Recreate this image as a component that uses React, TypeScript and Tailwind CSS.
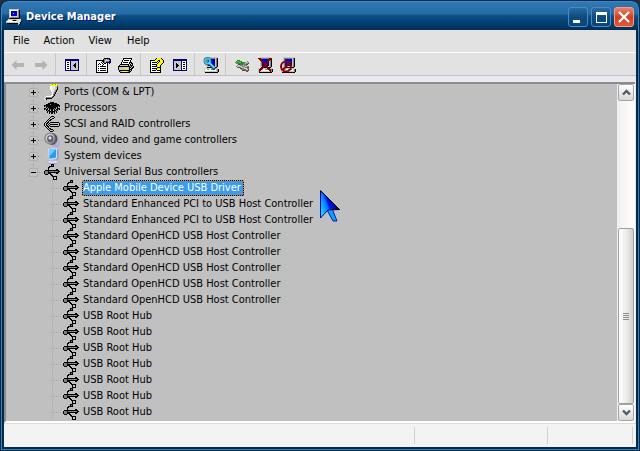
import type { ReactNode } from "react";

const palette: Record<string, string> = {
  K: "#000000",
  W: "#ffffff",
  G: "#808080",
  D: "#484848",
  S: "#c8c8c0",
  L: "#e4e4e4",
  B: "#0000e0",
  N: "#000080",
  C: "#38c0f0",
  A: "#90dcff",
  Y: "#ffff00",
  O: "#a09000",
  E: "#209020",
  F: "#60c850",
  T: "#906030",
};

function Pixels({ rows, children }: { rows: string[]; children?: ReactNode }) {
  const width = Math.max(...rows.map((r) => r.length));
  return (
    <svg
      width={width}
      height={rows.length}
      viewBox={`0 0 ${width} ${rows.length}`}
      shapeRendering="crispEdges"
      className="block shrink-0"
      aria-hidden="true"
    >
      {rows.flatMap((row, y) =>
        [...row].map((c, x) =>
          palette[c] ? <rect key={`${x}-${y}`} x={x} y={y} width="1" height="1" fill={palette[c]} /> : null
        )
      )}
      {children}
    </svg>
  );
}

const usb = [
  ".......KKK......",
  ".......KGK......",
  ".....KKKKK......",
  "....KK..........",
  "....K...........",
  "....K.......KK..",
  ".KKKKKKKKKKKKKK.",
  "KGGGKGGGGGGGGGKK",
  "KGGGKKKKKKKKKKK.",
  "KGGGKKK.....KK..",
  ".KKK..KK........",
  ".......KK.......",
  "........KKKKK...",
  ".........KSSK...",
  ".........KSSK...",
  ".........KKKK...",
];

const ports = [
  "......YYOYYOYY..",
  "......SYYYYYYG..",
  "......WWLLLSSG..",
  "......WWLLLSSK..",
  "......WWLLLSSK..",
  "......WWLLLSGK..",
  ".......WLLSGK...",
  ".......WLLSGK...",
  "........WSGK....",
  "........WSGK....",
  "........WGK.....",
  ".......WWGK.....",
  "..WWWWWWGK......",
  ".WGGGGGGK.......",
  "WGKKKKKK........",
  ".WK.............",
];

const processor = [
  "................",
  "................",
  "......KKKK......",
  "....KKKKKKKKK...",
  "..KKKKGKKKKKKKK.",
  "KKKKKKKKKKKKKKKK",
  "KGKKKKKKKKKKKKGK",
  ".SKGKKKKKKKKGKS.",
  "KKSKGKKKKKGKSKKK",
  "KGKKSKGKKGKSKKGK",
  ".SKGKKSKKSKKGKS.",
  "..SKGKKKKKKGKS..",
  "...K.KGKKGK.K...",
  ".....K.KK.K.....",
  "................",
  "................",
];

const scsi = [
  ".......KKK......",
  "......KSSSK.....",
  ".....KSSKK......",
  "....KSKK........",
  "...KSKK.........",
  "..KSK...........",
  ".KSKK.KKKKKKKKK.",
  "KSKK.KSSSSSSSSSK",
  "KSK.KSKKKKKKKKSK",
  "KSKK.KSSSSSSSSSK",
  ".KSKK.KKKKKKKKK.",
  "..KSK...........",
  "...KSKK.........",
  "....KSKKK.......",
  ".....KSSSK......",
  "......KKK.......",
];

const computer = [
  "...SSSSSSSSSSS..",
  "...SGGGGGGGGSGK.",
  "...SGBBBBBBNSGK.",
  "...SGBBBBBBNSGK.",
  "...SGBBBBBBNSGK.",
  "...SGBBBBBBNSGK.",
  "...SGBBBBBBNSGK.",
  "...SGBBBBBBNSGK.",
  "...SGNNNNNNNSGK.",
  "...SSSSSSSSSSGK.",
  "....KKKKKKKKKK..",
  ".SSSSSSSSSSSSSS.",
  ".SWWFFWWGGGGWSGK",
  ".SWWWWWWWWWWWSGK",
  ".SSSSSSSSSSSSSGK",
  "..KKKKKKKKKKKKK.",
];

const appIcon = [
  "...SSSSSSSSSS...",
  "...SWWWWWWWWGK..",
  "...SWNNNNNNSGK..",
  "...SWNBBBBBSGK..",
  "...SWNBABBBSGK..",
  "...SWNBBBBBSGK..",
  "...SWNBBBBBSGK..",
  "...SWSSSSSSSGK..",
  "...SGGGGGGGGGK..",
  "....KKKKKKKKK...",
  "..SSSSSSSSSSLLS.",
  ".SWWWWGKKKGWSLS.",
  "SWWWWWWWWWWSLLSK",
  "SSSSSSSSSSSSLSK.",
  ".KKKKKKKKKKKSSK.",
  "............SK..",
];

const paneLeft = [
  "NNNNNNNNNNNNNN",
  "NNNNNNNNNNNNNN",
  "NWWWWNSSSSSSSN",
  "NWKKWNSSSSSSSN",
  "NWWWWNSSSSKSSN",
  "NWKKWNSSSKKSSN",
  "NWWWWNSSKKKSSN",
  "NWKKWNSSSKKSSN",
  "NWWWWNSSSSKSSN",
  "NWKKWNSSSSSSSN",
  "NWWWWNSSSSSSSN",
  "NNNNNNNNNNNNNN",
];

const paneRight = [
  "NNNNNNNNNNNNNN",
  "NNNNNNNNNNNNNN",
  "NSSSSSSSNWWWWN",
  "NSSSSSSSNWKKWN",
  "NSSKSSSSNWWWWN",
  "NSSKKSSSNWKKWN",
  "NSSKKKSSNWWWWN",
  "NSSKKSSSNWKKWN",
  "NSSKSSSSNWWWWN",
  "NSSSSSSSNWKKWN",
  "NSSSSSSSNWWWWN",
  "NNNNNNNNNNNNNN",
];

const properties = [
  ".........KKKKNN.",
  "........KGGSGGNN",
  ".KKKKKKKKGSSSSGN",
  ".KWWWWWKKGSGGGNN",
  ".KWWWWKWKGGKKKNN",
  ".KWWKWWKWKKWK.N.",
  ".KWKWKWWKWWWK...",
  ".KWWWWWKWWWWK...",
  ".KWKWKKKKKKWK...",
  ".KWWWWWWWWWWK...",
  ".KWKWKKKKKKWK...",
  ".KWWWWWWWWWWK...",
  ".KWKWKKKKKKWK...",
  ".KWWWWWWWWWWK...",
  ".KKKKKKKKKKKK...",
];

const printer = [
  ".....KKKKKKKKK..",
  ".....KWWWWWWWK..",
  "....KWKKKKKWK...",
  "....KWWWWWWWK...",
  "...KWKKKKKWKKK..",
  "...KWWWWWWWKSKK.",
  "..KKKKKKKKKSKSK.",
  ".KSSSSSSSSKSKKK.",
  "KKKKKKKKKKKKSKSK",
  "KSSSSSSSSSSKKSKK",
  "KSSSSSSYYYSKSKK.",
  "KSSSSSSSSSSKKK..",
  ".KKKKKKKKKKKSK..",
  ".KGSYYYYYSGKK...",
  "..KKKKKKKKKK....",
];

const help = [
  ".......KYYYYK...",
  "......KYYYYYYK..",
  ".KKKKKYYYKKYYYK.",
  ".KWWWWYYKWKYYYK.",
  ".KWKKKKKWKYYYYK.",
  ".KWWWWWWKYYYYK..",
  ".KWKKKKKYYYYK...",
  ".KWWWWWKYYYK....",
  ".KWKKKKKYYYK....",
  ".KWWWWWWKKKK....",
  ".KWKKKKKYYYK....",
  ".KWWWWWKYYYK....",
  ".KWKKKKWKKKK....",
  ".KWWWWWWWWWK....",
  ".KKKKKKKKKKK....",
];

const update = [
  "................",
  "...EEE..........",
  "..EFFEEE.....G..",
  ".GGEEFFEEEGGSSG.",
  "..GGEEEEEEGSGGD.",
  "....DDEEEGGGDD..",
  "...GSSGGGSGGG...",
  "..GSSSSSGGGSSGG.",
  "...GDDGSSSSGGDD.",
  "......DDGGSSLGG.",
  ".......GGGTTSSD.",
  "........DDDTTTD.",
  "............TD..",
];

function SoundIcon() {
  return (
    <svg width="16" height="16" viewBox="0 0 16 16" className="block shrink-0" aria-hidden="true">
      <ellipse cx="8" cy="7" rx="5.6" ry="6" fill="#55555c" />
      <ellipse cx="5.8" cy="6.3" rx="5.6" ry="5.9" fill="#888890" />
      <ellipse cx="5.8" cy="6.3" rx="4.2" ry="4.6" fill="#c8c8d0" />
      <ellipse cx="6.3" cy="6.8" rx="3.2" ry="3.6" fill="#606068" />
      <circle cx="6" cy="6" r="1.5" fill="#e8e8f4" />
      <path d="M9 14.5Q12 13.5 12.5 10M11.5 15.5Q15 13.5 15 9.5" fill="none" stroke="#9aa0ee" strokeWidth="1.2" />
    </svg>
  );
}

function SystemIcon() {
  return (
    <svg width="16" height="16" viewBox="0 0 16 16" className="block shrink-0" aria-hidden="true">
      <path d="M12 .5L14.500 2V11L12 12Z" fill="#8c98c8" />
      <ellipse cx="9" cy="13.7" rx="5.5" ry="1.9" fill="#e4e4f4" stroke="#9090b8" strokeWidth=".8" />
      <path d="M7 10H11V13.5H7Z" fill="#b8bcd8" />
      <path d="M4 1L13 0V10.5L5 12Z" fill="#c8e4fc" />
      <path d="M5 1.800L12 1V9.600L5.500 10.800Z" fill="#249cf4" />
      <path d="M5 1.800L12 1L5.300 8.500Z" fill="#74ccff" />
    </svg>
  );
}

function ArrowIcon({ right = false }: { right?: boolean }) {
  return (
    <svg width="14" height="10" viewBox="0 0 14 10" aria-hidden="true">
      <path
        d={right ? "M13.5 5L8.5 0V3H1V7H8.5V10Z" : "M.5 5L5.5 0V3H13V7H5.5V10Z"}
        fill="#b4b4b4"
      />
    </svg>
  );
}

const menus = ["File", "Action", "View", "Help"];

type Tool = { label: string; icon: ReactNode };

const toolGroups: Tool[][] = [
  [
    { label: "Back", icon: <ArrowIcon /> },
    { label: "Forward", icon: <ArrowIcon right /> },
  ],
  [{ label: "Show/Hide Console Tree", icon: <Pixels rows={paneLeft} /> }],
  [
    { label: "Properties", icon: <Pixels rows={properties} /> },
    { label: "Print", icon: <Pixels rows={printer} /> },
  ],
  [
    { label: "Help topics", icon: <Pixels rows={help} /> },
    { label: "Show/Hide Action Pane", icon: <Pixels rows={paneRight} /> },
  ],
  [
    {
      label: "Scan for hardware changes",
      icon: (
        <Pixels rows={computer}>
          <g shapeRendering="auto" fill="none">
            <path d="M5.500 5.500L12 12" stroke="#003860" strokeWidth="3.600" />
            <circle cx="4.500" cy="4" r="2.500" stroke="#406878" strokeWidth="3" />
            <circle cx="4.500" cy="4" r="2.500" stroke="#38d0f0" strokeWidth="1.500" />
            <path d="M6 5.500L11.500 11" stroke="#50e0ff" strokeWidth="2" />
          </g>
        </Pixels>
      ),
    },
  ],
  [
    { label: "Update Driver", icon: <Pixels rows={update} /> },
    {
      label: "Uninstall",
      icon: (
        <Pixels rows={computer}>
          <path d="M2 1L14 14.500M14 1L2 14.500" stroke="#800000" strokeWidth="2" />
        </Pixels>
      ),
    },
    {
      label: "Disable",
      icon: (
        <Pixels rows={computer}>
          <g shapeRendering="auto" fill="none" stroke="#8c0000" strokeWidth="2">
            <circle cx="6" cy="9.5" r="5" />
            <path d="M9.5 6L2.5 13" />
          </g>
        </Pixels>
      ),
    },
  ],
];

const categories = [
  { name: "Ports (COM & LPT)", icon: <Pixels rows={ports} /> },
  { name: "Processors", icon: <Pixels rows={processor} /> },
  { name: "SCSI and RAID controllers", icon: <Pixels rows={scsi} /> },
  { name: "Sound, video and game controllers", icon: <SoundIcon /> },
  { name: "System devices", icon: <SystemIcon /> },
  {
    name: "Universal Serial Bus controllers",
    icon: <Pixels rows={usb} />,
    devices: [
      "Apple Mobile Device USB Driver",
      ...Array(2).fill("Standard Enhanced PCI to USB Host Controller"),
      ...Array(5).fill("Standard OpenHCD USB Host Controller"),
      ...Array(7).fill("USB Root Hub"),
    ] as string[],
  },
];

function Expander({ open, name }: { open: boolean; name: string }) {
  return (
    <span className="flex h-4 flex-col items-center">
      <span className="h-1 border-l border-dotted border-[#acacac]" />
      <button
        type="button"
        aria-label={`${open ? "Collapse" : "Expand"} ${name}`}
        className="flex size-[9px] items-center justify-center border border-[#b0b0b0] bg-[#c4c4c4]"
      >
        <svg width="5" height="5" viewBox="0 0 5 5" shapeRendering="crispEdges" aria-hidden="true">
          <path d={open ? "M0 2H5V3H0Z" : "M0 2H2V0H3V2H5V3H3V5H2V3H0Z"} />
        </svg>
      </button>
      {!open && <span className="h-[3px] border-l border-dotted border-[#acacac]" />}
    </span>
  );
}

function TitleButton({ label, close = false, children }: { label: string; close?: boolean; children: ReactNode }) {
  return (
    <button
      type="button"
      aria-label={label}
      className={`flex size-5 items-center justify-center rounded-[3px] border ${
        close
          ? "border-[#f0a090] bg-linear-to-b from-[#e88068] via-[#d83c1c] to-[#e05838]"
          : "border-[#4a8cc0] bg-linear-to-b from-[#2a6ca4] via-[#0c4a80] to-[#0c4478]"
      }`}
    >
      {children}
    </button>
  );
}

function ScrollButton({ label, d }: { label: string; d: string }) {
  return (
    <button
      type="button"
      aria-label={label}
      className="flex h-[17px] w-full items-center justify-center rounded-xs border border-[#a4a4a4] bg-linear-to-b from-white to-[#d8d8d8]"
    >
      <svg width="9" height="7" viewBox="0 0 9 7" aria-hidden="true">
        <path d={d} fill="none" stroke="#505c6c" strokeWidth="2.4" />
      </svg>
    </button>
  );
}

export default function App() {
  return (
    <div className="bg-[#203040]">
      <div className="relative flex min-h-screen flex-col overflow-hidden rounded-t-lg border border-[#04294a] bg-[#04294a] font-['DejaVu_Sans_Condensed','DejaVu_Sans',sans-serif] text-[11px] leading-4 text-black">
        <header className="flex h-[29px] items-center rounded-t-[7px] border-x border-t border-[#3d86bf] bg-[linear-gradient(#3179b4_0%,#256ba5_42%,#0c4f86_50%,#023f70_75%,#002f58_100%)] pt-0.5 pr-1 pl-1">
          <Pixels rows={appIcon} />
          <h1 className="ml-0.5 flex-1 pl-0.5 font-bold text-white [text-shadow:1px_1px_0_#001e70]">Device Manager</h1>
          <div className="flex gap-[3px]">
            <TitleButton label="Minimize">
              <span className="mt-2 mr-1 h-[3px] w-[7px] bg-white" />
            </TitleButton>
            <TitleButton label="Maximize">
              <span className="h-[11px] w-[11px] border border-t-[3px] border-white" />
            </TitleButton>
            <TitleButton label="Close" close>
              <svg width="12" height="12" viewBox="0 0 12 12" aria-hidden="true">
                <path d="M1 1L11 11M11 1L1 11" stroke="#fff" strokeWidth="2.4" />
              </svg>
            </TitleButton>
          </div>
        </header>

        <div className="flex flex-1 flex-col border-x border-b border-[#3080bc] px-0.5 pb-0.5">
          <div className="flex flex-1 flex-col bg-[#ebe9ed]">
            <nav className="flex h-[23px] items-center border-b border-white bg-[#e2e2e2] pl-0.5">
              {menus.map((menu) => (
                <button key={menu} type="button" className="px-[7px] last:pl-2">
                  {menu}
                </button>
              ))}
            </nav>

            <div role="toolbar" className="flex h-[23px] border-b border-[#c4c2c6] bg-[#e2e2e2] pl-0.5">
              {toolGroups.map((group, i) => (
                <div key={i} className="flex">
                  {i > 0 && <span className="mr-1 ml-[3px] w-px bg-[#c8c8c8]" />}
                  {group.map((tool) => (
                    <button
                      key={tool.label}
                      type="button"
                      aria-label={tool.label}
                      className="flex w-[23px] items-center justify-center pt-0.5"
                    >
                      {tool.icon}
                    </button>
                  ))}
                </div>
              ))}
            </div>

            <main className="mt-[6px] mr-px flex flex-1 border-t-2 border-b-2 border-l-2 border-t-[#8c8c90] border-b-white border-l-[#8c8c90] bg-[#c0c0c0]">
              <ul role="tree" aria-label="Devices" className="flex-1 pl-[23px]">
                {categories.map((category) => (
                  <li key={category.name} role="treeitem" aria-expanded={!!category.devices}>
                    <div className="flex h-4 items-center">
                      <Expander open={!!category.devices} name={category.name} />
                      <span className="mr-0.5 w-1 border-t border-dotted border-[#a8a8a8]" />
                      {category.icon}
                      <span className="px-1 whitespace-nowrap">{category.name}</span>
                    </div>
                    {category.devices && (
                      <ul role="group" className="pl-[23px]">
                        {category.devices.map((device, i) => (
                          <li
                            key={i}
                            role="treeitem"
                            aria-selected={i === 0}
                            className="flex h-4 items-center border-l border-dotted border-[#acacac]"
                          >
                            <span className="mr-0.5 w-2 border-t border-dotted border-[#acacac]" />
                            <Pixels rows={usb} />
                            {i === 0 ? (
                              <span className="ml-[3px] flex h-4 border border-dotted border-[#e87c20] bg-black">
                                <span className="flex items-center bg-[#3c9cec] pr-0.5 whitespace-nowrap text-white">
                                  {device}
                                </span>
                              </span>
                            ) : (
                              <span className="px-1 whitespace-nowrap">{device}</span>
                            )}
                          </li>
                        ))}
                      </ul>
                    )}
                  </li>
                ))}
              </ul>

              <div className="flex w-[18px] flex-col bg-linear-to-r from-[#f0f0f0] to-white px-px">
                <ScrollButton label="Scroll up" d="M1 5.5L4.5 2L8 5.5" />
                <div className="grow-[127] basis-0" />
                <div className="flex grow-[174] basis-0 items-center justify-center rounded-xs border border-[#a0a0a0] bg-linear-to-r from-white via-[#ececec] to-[#d0d0d0]">
                  <span className="flex flex-col gap-px">
                    {[0, 1, 2, 3].map((i) => (
                      <span key={i} className="h-px w-1.5 bg-[#8c8c8c]" />
                    ))}
                  </span>
                </div>
                <ScrollButton label="Scroll down" d="M1 1.5L4.5 5L8 1.5" />
              </div>
            </main>

            <footer className="flex h-6 border-t border-[#dcdcdc] bg-[#f3f3f3] py-[3px] pr-[3px]">
              <span className="flex-1 border-r border-[#d0d0d0]" />
              <span className="w-[133px] border-r border-[#d0d0d0]" />
              <span className="w-[85px] border-r border-[#d0d0d0]" />
            </footer>
          </div>
        </div>

        {/* Mouse pointer */}
        <svg width="21" height="33" viewBox="0 0 21 33" className="absolute top-[189px] left-[319px]" aria-hidden="true">
          <defs>
            <linearGradient id="pointer" x1="0" y1=".7" x2=".8" y2=".3">
              <stop offset="0" stopColor="#10d8ff" />
              <stop offset=".4" stopColor="#0878ff" />
              <stop offset=".55" stopColor="#0010e0" />
              <stop offset="1" stopColor="#0000a0" />
            </linearGradient>
          </defs>
          <path d="M7 20L12 18.5L17 31H13Z" fill="#10a0ff" stroke="#0020a0" />
          <path d="M.5 1V28L8 20L19.5 19.5Z" fill="url(#pointer)" stroke="#0000b0" />
          <path d="M.5 .5L19.5 19.5H11" fill="none" stroke="#000" />
        </svg>
      </div>
    </div>
  );
}
